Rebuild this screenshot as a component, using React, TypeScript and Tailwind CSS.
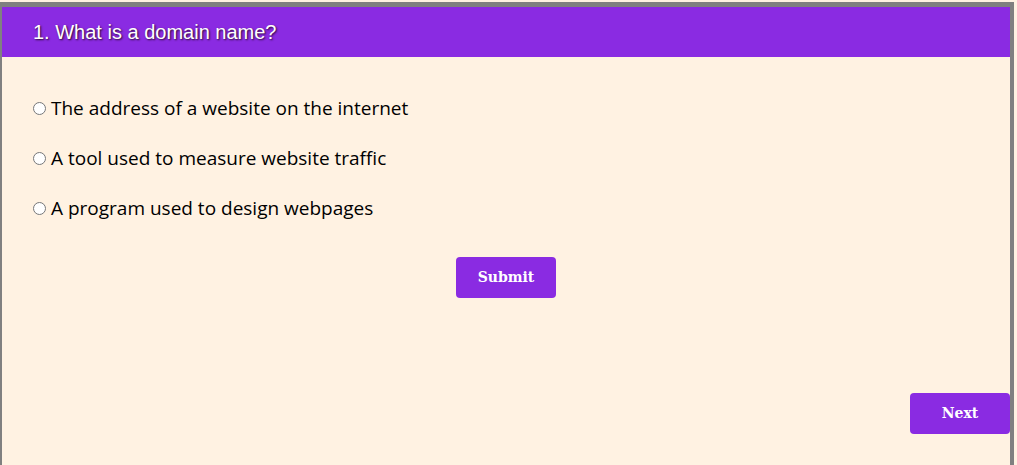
import React from "react";

const options = [
  "The address of a website on the internet",
  "A tool used to measure website traffic",
  "A program used to design webpages",
];

export default function App() {
  return (
    <div className="min-h-screen w-full bg-[#fff2e2] pt-[2px]">
      <div className="flex h-[463px] w-[1014px] flex-col border-t-[5px] border-r-[4px] border-l-[2px] border-[#808080] bg-[#fff2e2]">
        <div className="flex h-[50px] items-center bg-[#8a2be2] pl-[31px]">
          <h1
            className="text-[20px] leading-none text-white [text-shadow:1px_1px_2px_#2a0a2a]"
            style={{ fontFamily: '"Liberation Sans", Arial, sans-serif' }}
          >
            1. What is a domain name?
          </h1>
        </div>
        <div className="flex flex-1 flex-col">
          <div
            className="flex flex-col pt-[26px] pl-[31px]"
            style={{ fontFamily: '"Open Sans", "Noto Sans", sans-serif' }}
          >
            {options.map((o, i) => (
              <label key={i} className="flex h-[50px] items-center gap-[5px] text-[19px] text-black">
                <input type="radio" name="q1" className="h-[13px] w-[13px]" />
                <span>{o}</span>
              </label>
            ))}
          </div>
          <div className="mt-[24px] flex justify-center">
            <button
              className="h-[41px] w-[100px] rounded-[4px] bg-[#8a2be2] text-[14px] font-bold text-white"
              style={{ fontFamily: '"DejaVu Serif", Georgia, serif' }}
            >
              Submit
            </button>
          </div>
          <div className="mt-[95px] flex justify-end">
            <button
              className="h-[41px] w-[100px] rounded-[4px] bg-[#8a2be2] text-[14px] font-bold text-white"
              style={{ fontFamily: '"DejaVu Serif", Georgia, serif' }}
            >
              Next
            </button>
          </div>
        </div>
      </div>
    </div>
  );
}
